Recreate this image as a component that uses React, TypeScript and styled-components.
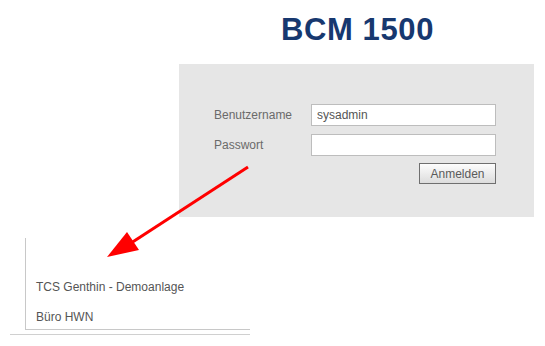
import styled, { createGlobalStyle } from "styled-components";

const GlobalStyle = createGlobalStyle`
    html, body {
        margin: 0;
        padding: 0;
        background: #ffffff;
    }
    body {
        font-family: "Liberation Sans", Arial, sans-serif;
    }
`

const Page = styled.div`
    position: relative;
    width: 545px;
    height: 346px;
    overflow: hidden;
    background: #ffffff;
`

const LoginArea = styled.section`
    margin-left: 179px;
    width: 355px;
    display: flex;
    flex-direction: column;
`

const TitleBar = styled.div`
    height: 64px;
    display: flex;
    justify-content: center;
    align-items: flex-start;
`

const Title = styled.h1`
    margin: 12px 0 0 2px;
    font-family: "Liberation Sans", Arial, sans-serif;
    font-weight: bold;
    font-size: 31px;
    line-height: 36px;
    letter-spacing: 0.6px;
    color: #17386f;
`

const Panel = styled.div`
    height: 153px;
    box-sizing: border-box;
    background: #e6e6e6;
    padding: 40px 38px 0 35px;
`

const Form = styled.form`
    display: grid;
    grid-template-columns: 97px 185px;
    row-gap: 8px;
    align-items: center;
`

const Label = styled.label`
    font-size: 12px;
    color: #6a6a6a;
`

const Input = styled.input`
    box-sizing: border-box;
    width: 185px;
    height: 22px;
    margin: 0;
    padding: 0 5px;
    border: 1px solid #bdbdbd;
    background: #ffffff;
    font-family: "Liberation Sans", Arial, sans-serif;
    font-size: 12px;
    color: #555555;
    outline: none;
`

const ButtonCell = styled.div`
    grid-column: 2;
    display: flex;
    justify-content: flex-end;
    margin-top: -1px;
`

const Button = styled.button`
    box-sizing: border-box;
    width: 77px;
    height: 21px;
    padding: 0;
    border: 1px solid #6f6f6f;
    background: linear-gradient(#fdfdfd, #dcdcdc);
    font-family: "Liberation Sans", Arial, sans-serif;
    font-size: 12px;
    color: #5a5a5a;
`

const ListArea = styled.div`
    margin-top: 21px;
    margin-left: 10px;
    width: 240px;
    border-bottom: 1px solid #d0d0d0;
    padding-bottom: 4px;
`

const ListBox = styled.div`
    margin-left: 15px;
    border-left: 1px solid #c8c8c8;
    border-bottom: 1px solid #c8c8c8;
    padding: 42px 0 5px 10px;
    display: flex;
    flex-direction: column;
    gap: 16px;
`

const Item = styled.div`
    font-size: 12px;
    line-height: 14px;
    color: #555555;
`

const Arrow = styled.svg`
    position: absolute;
    left: 0;
    top: 0;
    pointer-events: none;
`

const App = () => {
    return (
        <Page>
            <GlobalStyle />
            <LoginArea>
                <TitleBar>
                    <Title>BCM 1500</Title>
                </TitleBar>
                <Panel>
                    <Form onSubmit={(e) => e.preventDefault()}>
                        <Label>Benutzername</Label>
                        <Input defaultValue="sysadmin" />
                        <Label>Passwort</Label>
                        <Input type="password" />
                        <ButtonCell>
                            <Button type="submit">Anmelden</Button>
                        </ButtonCell>
                    </Form>
                </Panel>
            </LoginArea>
            <ListArea>
                <ListBox>
                    <Item>TCS Genthin - Demoanlage</Item>
                    <Item>Büro HWN</Item>
                </ListBox>
            </ListArea>
            <Arrow width="545" height="346" viewBox="0 0 545 346">
                <line x1="248" y1="167" x2="128" y2="245" stroke="#ff0000" strokeWidth="3" />
                <polygon points="107,257 127,232 139,250" fill="#ff0000" />
            </Arrow>
        </Page>
    )
}

export default App;
